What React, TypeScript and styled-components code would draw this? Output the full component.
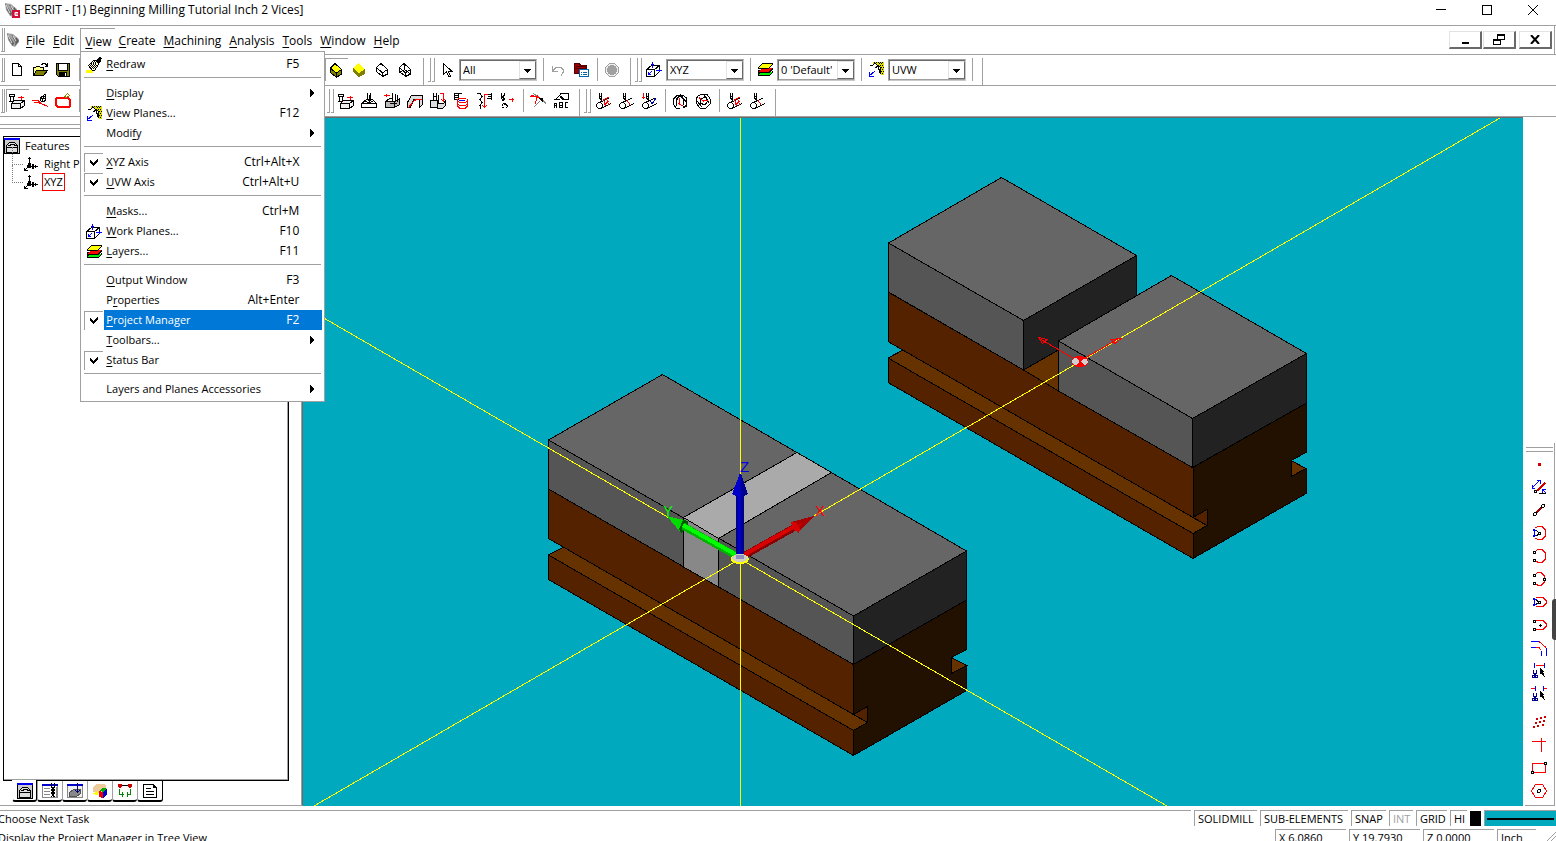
import React from 'react';
import styled, { createGlobalStyle, css } from 'styled-components';

const LINE = '#a0a0a0';
const DARK = '#696969';
const TEAL = '#00a9bd';
const HIGHLIGHT = '#0078d7';
const FONT = '"Open Sans", "Noto Sans", sans-serif';

const GlobalStyle = createGlobalStyle`
  *, *::before, *::after { box-sizing: border-box; }
  body { margin: 0; background: #fff; }
  button, select { font: inherit; color: inherit; border: 0; border-radius: 0; padding: 0; margin: 0; background: transparent; }
`;

/* ---------- drawing helpers ---------- */

type PProps = { d: string; c?: string; f?: string; w?: number };
const P = ({ d, c = '#000', f = 'none', w = 1 }: PProps) => (
  <path d={d} stroke={c} fill={f} strokeWidth={w} />
);
const F = ({ d, f = '#000' }: { d: string; f?: string }) => <path d={d} fill={f} />;

const RED = '#f00';
const BLUE = '#00f';
const CYL = 'M4.5 9.5L14 5M6 15.5L16 10.5M3.5 9.5h2l2 2v2l-2 2h-2l-2-2v-2z';

const icons: Record<string, React.ReactNode> = {
  newFile: <P d="M3.5 1.5h6l3 3v9h-9zM9.5 1.5v3h3" />,
  open: (
    <>
      <P d="M1.5 13.5v-8h2l1-1h3l1 1h3v3" f="#ff8" />
      <P d="M1.5 13.5l3-5h11l-4 5z" f="#808000" />
      <P d="M9 2.5h1l1-1h2l1 1v1M15.5 1v3h-3" />
    </>
  ),
  save: (
    <>
      <P d="M1.5 1.5h13v13h-11l-2-2z" f="#808000" />
      <F d="M4 2h8v6H4z" f="#fff" />
      <F d="M4 10h8v4H4z" />
      <F d="M10 11h1v3h-1z" f="#fff" />
      <P d="M3.5 2v6.5h9V2" />
    </>
  ),
  cubeEdge: (
    <>
      <F d="M2 6L7 2l7 6-6 5z" f="#ff0" />
      <F d="M2 6l6 6v3L2 11zM8 11l6-4v5l-5 3z" f="#808000" />
      <P d="M2.5 6L7 1.5l6.5 6v4.5L8.5 15.5l-6-5zM2.5 6l6 5.5v4M8.5 11l5-3.5" />
    </>
  ),
  cubeSolid: (
    <>
      <F d="M2 6l5-5 7 6-6 5z" f="#ff0" />
      <F d="M2 6l6 5v4l-6-5zM8 11l6-4v5l-6 3z" f="#808000" />
    </>
  ),
  cubeHidden: <P d="M2.5 5.5L7 1.5l6.5 6v4.5L8.5 14.5l-6-5zM2.5 5.5l6 5.5v3.5M8.5 11l5-3.5" />,
  cubeWire: <P d="M2.5 5.5L7 1.5l6.5 6v4.5L8.5 14.5l-6-5zM2.5 5.5l6 5.5v3.5M8.5 11l5-3.5M7.5 1.5v6l6 4.5M7.5 7.5l-5 3" />,
  cursor: <P d="M4.5 1.5v11l3-3l2 5h2l-2-5h3.5z" f="#fff" />,
  undo: <P d="M2.5 4v5h5M3 8.5l3-3h5l2 2v3l-2 3" c={LINE} />,
  props: (
    <>
      <P d="M1.5 1.5h5l1 2h6v8h-12z" c="#500" f="#900" />
      <P d="M2 6.5h11M3 4.5h10" c="#500" />
      <P d="M6.5 7.5h9v7h-9z" c="#06a" f="#fff" />
      <P d="M8 10.5h1M10 10.5h4M8 12.5h1M10 12.5h4" c="#06a" />
    </>
  ),
  stop: (
    <>
      <P d="M5.5 1.5h5l4 4v5l-4 4h-5l-4-4v-5z" c={LINE} f="#eee" />
      <circle cx="8" cy="8" r="5" fill={LINE} />
    </>
  ),
  workPlane: (
    <>
      <P d="M.5 7.5h8v7h-8zM.5 7.5l5-4h8l-5 4M13.5 3.5v6l-5 5" />
      <P d="M6.5 0v6M5 2.5h3M10 8.5h6M13.5 7v3M3 12l3-3M2.5 10v2.5h2" c={BLUE} />
    </>
  ),
  layers: (
    <>
      <F d="M1 11h12l3-3v2l-3 4H1z" />
      <F d="M2 12l3-2h10l-3 3H1z" f="#0e0" />
      <F d="M1 8h12l3-3v2l-3 4H1z" />
      <F d="M2 9l3-3h10l-3 4H1z" f="#f00" />
      <F d="M1 5l4-4h11v1l-4 5H1z" />
      <F d="M2 5l4-3h9l-3 4H2z" f="#ff0" />
    </>
  ),
  viewPlane: (
    <>
      <F d="M5 0h11v13h-3V5L8 2H5z" f="#dd0" />
      <P d="M6 .5h1M8 .5h1M10 .5h1M12 .5h1M14 .5h1M7 1.5h1M11 1.5h1M13 1.5h1M12 3.5h1M14 3.5h1M13 5.5h1M15 5.5h1M14 7.5h1M13 9.5h1M15 9.5h1M14 11.5h1" />
      <P d="M2 3.5h2l3-2l6 4M7 5.5l3-1l2 6M12.5 5v7M9 3l4 8" />
      <P d="M7 9l-6 5M1.5 10v4.5h4" c={BLUE} />
    </>
  ),
  brush: (
    <>
      <F d="M0 13h7v3H0z" f="#ff0" />
      <P d="M2.5 8.5l5-5h4l1 4l-4 6h-2z" f="#ffc" />
      <P d="M5 6.5h1M7 6.5h1M9 6.5h1M4 8.5h1M6 8.5h1M8 8.5h1M10 8.5h1M6 10.5h1M8 10.5h1M8 4.5h1M10 4.5h1M5 7.5h1M7 7.5h1M9 7.5h1M5 9.5h1M7 9.5h1M9 9.5h1M7 11.5h1M7 5.5h1M9 5.5h1" />
      <F d="M10 3l3-3 3 1-1 3-3 3z" />
    </>
  ),
  millBox: (
    <>
      <P d="M.5 1.5h5v2h-5zM1.5 3.5v5M4.5 3.5v5M0 8.5h5" />
      <P d="M2.5 10.5h9v5h-9zM2.5 10.5l3-3h10l-4 3M15.5 7.5v5l-4 3" f="#eee" />
      <P d="M9 4.5h6M12.5 2.5v4" c={RED} />
    </>
  ),
  probe: (
    <>
      <circle cx="11" cy="6" r="2.5" fill="none" stroke="#000" />
      <P d="M9.5 9l3-8M13.5 1v6M9 5h4" />
      <P d="M0 7.5h6l3 3l7 3M2 9l7 1.5" c={RED} />
    </>
  ),
  pocketRed: (
    <>
      <P d="M2 5h11l2 2v6l-1 1H3l-2-2V6z" c={RED} w={2} />
      <P d="M9.5 3.5l3-3l2 2l-3 2z" c="#880" />
    </>
  ),
  millFace: (
    <>
      <P d="M.5 10.5l5-4h6l4 4v4h-15zM.5 10.5h15" f="#fff" />
      <P d="M6.5 0v6l2 3l1-3V0M8.5 2v6M4 8.5l4 1l4-1" />
    </>
  ),
  millPocket: (
    <>
      <P d="M1.5 8.5h9v6h-9zM10.5 8.5l5-3v6l-5 3M1.5 8.5l4-3h3" f="#bbb" />
      <P d="M8.5 0v8l2 1l1-1V1M13.5 2v7M6 10.5h7" />
      <P d="M0 2.5h6M2.5 1v3" c={RED} />
    </>
  ),
  millContour: (
    <>
      <P d="M.5 14.5v-5l4-7h11v9l-3 3v-8h-6l-3 8z" f="#ddd" />
      <P d="M1 15l5-6l4-3h5" c={RED} />
    </>
  ),
  millRest: (
    <>
      <P d="M.5 7.5h7v7h-7zM7.5 10.5h6l2-3v5l-3 3h-5z" f="#ddd" />
      <P d="M3.5 0v8M6.5 0v8M3.5 3.5h3M8.5 2v8" />
      <P d="M10 .5h3v8M11 6.5h1M14 6.5h1M12 7.5h2" c={RED} />
    </>
  ),
  millThread: (
    <>
      <P d="M1.5 .5h4v6h-4zM3 .5h6M2 2.5h4M2 4.5h4" />
      <P d="M5 5.5h8M4.5 6v7l2 2h6l2-2V6M5 8.5l2 1h5l2-1M5 11.5l2 1h5l2-1" c={RED} />
      <P d="M6 7.5h6" c={BLUE} />
    </>
  ),
  millPark: (
    <>
      <P d="M1 .5h3l2 3l-2 3l2 3l-2 3l1 3M15.5 0v7M11 1.5h4M12 3.5h3M11 5.5h4" />
      <P d="M12 1.5H8.5v12M6 12l2.500 2.500L11 12" c={RED} />
    </>
  ),
  drill: (
    <>
      <P d="M2.5 0v3l3 3l-2 2M5.5 0v2l-3 3l2 3M2.5 13.5l2-3l4 2l-1 3M6.5 10l2 4M3 14.5h2" />
      <P d="M10 6.5h5M13.5 4.5v4" c={RED} />
    </>
  ),
  trim: (
    <>
      <P d="M3 .5l8 5l5 5M10 8l-6 6" c="#888" />
      <P d="M0 3.5h4l5 1l4 3M8 2l-3 9M1 2.5h3" c={RED} />
      <F d="M9 5h4v4h-1z" />
    </>
  ),
  engrave: (
    <>
      <P d="M3 6.5l5-6h7v6h-5l-3-3M8 3l3 4M1 6.5h6" />
      <P d="M1.5 15v-5h2v5M1.5 12.5h2M6.5 9.5h3v5h-3zM6.5 12h3M15 9.5h-2.500v5H15" />
    </>
  ),
  lathe1: (
    <>
      <P d={CYL} />
      <P d="M4.5 0v5l2 2V0M4.5 3.5h2" />
      <P d="M8 6l3 7M11 5l3 7M8 7l6-3M9 12l5-4" c={RED} />
    </>
  ),
  lathe2: (
    <>
      <P d={CYL} />
      <P d="M5.5 0v5l2 2V0M5.5 3.5h2" />
      <P d="M9 7l3 5" c={RED} />
    </>
  ),
  lathe3: (
    <>
      <P d={CYL} />
      <P d="M5.5 0v5l2 2V0M5.5 3.5h2" />
      <P d="M2.5 0v6M1 4.5h3" c={RED} />
      <P d="M9 7l2 4l4-6" c="#00a" />
    </>
  ),
  spin1: (
    <>
      <P d="M1.5 12V6l4-4h5l4 3v7l-3 3M4.5 13V6l3-3l4 3v6M8 1l6 8M2 12l2 3h4M11 14l4-1M3 4l3 3M9 4l3-2" />
      <P d="M7.5 5v6l3 2M6 10l3 2" c={RED} />
    </>
  ),
  spin2: (
    <>
      <P d="M3 3l4-2h5l3 5v5l-4 4H5l-4-5V6zM5 6l6-2l2 4l-3 4l-5-2zM2 8l5 6M9 2l5 8" />
      <P d="M4 4.500l5 4M8 7.500h5" c={RED} />
    </>
  ),
  point: <F d="M7 7h3v3H7z" f="#d00000" />,
  dimLine: (
    <>
      <P d="M6 12l8-8" c="#c00" w={2} />
      <P d="M1.5 8.5l7-7M1 6v3h3M6 1.5h3v3M11.5 10.5v4M11 10.5h4M11 10l4 4" c={BLUE} />
      <P d="M3.5 11.5h2v2h-2zM8 14.5h7" />
    </>
  ),
  segment: (
    <>
      <P d="M5 11l6-6" c="#900" w={2} />
      <circle cx="4" cy="12" r="1.5" fill="#fff" stroke="#000" />
      <circle cx="12" cy="4" r="1.5" fill="#fff" stroke="#000" />
    </>
  ),
  arcC: (
    <>
      <P d="M4 3l3-1.5h4L14.5 5v6L11 14.5H7L4 13" c={RED} />
      <P d="M3.5 4v8M2 5.5h4M2 10.5h4M2.5 4v2M2.5 10v2" c={BLUE} />
      <P d="M7.5 7.5h2v2h-2zM5 5l3 3M5 11l3-2" />
    </>
  ),
  arc2: (
    <>
      <P d="M5 3l2-1.5h4L14.5 5v6L11 14.5H7L5 13" c={RED} />
      <P d="M2.5 3.5h2v2h-2zM2.5 11.5h2v2h-2z" f="#fff" />
    </>
  ),
  arc3: (
    <>
      <P d="M5 3l2-1.5h3L13.5 5v6L10 14.5H7L5 13" c={RED} />
      <P d="M2.5 3.5h2v2h-2zM2.5 11.5h2v2h-2zM12.5 7.5h2v2h-2z" f="#fff" />
    </>
  ),
  arcD: (
    <>
      <P d="M5 3.5h7l3 3v3l-3 3H5" c={RED} />
      <P d="M3.5 4v8M2 5.5h4M2 10.5h4M2.5 4v2M2.5 10v2" c={BLUE} />
      <P d="M7.5 7.5h2v2h-2zM5 6l3 2M5 10l3-1" />
    </>
  ),
  slot: (
    <>
      <P d="M5 3.5h7l3 3v3l-3 3H5" c={RED} />
      <P d="M2.5 3.5h2v2h-2zM2.5 11.5h2v2h-2zM8 8.5h3M9.5 7v3" f="#fff" />
    </>
  ),
  offset: (
    <>
      <P d="M0 1.5h8M0 7.5h5M10.5 11v5M15.5 8v8" c={BLUE} />
      <P d="M8 1.5l7 6M5 7.5h3l2.500 3" c={RED} />
    </>
  ),
  cutJoin: (
    <>
      <P d="M4.5 2.5h9" c={RED} />
      <P d="M3.5 0v5M13.5 0v5" c={BLUE} />
      <P d="M2.5 7v3l2 2M5.5 7v3l-2 2M1.5 12.5h2v2h-2zM4.5 12.5h2v2h-2z" c="#008" />
      <F d="M9 5l5 4h-2l2 5h-1l-3-4-1 1z" />
    </>
  ),
  cutSplit: (
    <>
      <P d="M0 2.5h4M13 2.5h3" c={RED} />
      <P d="M4.5 0v5M12.5 0v5" c={BLUE} />
      <P d="M2.5 7v3l2 2M5.5 7v3l-2 2M1.5 12.5h2v2h-2zM4.5 12.5h2v2h-2z" c="#008" />
      <F d="M9 5l5 4h-2l2 5h-1l-3-4-1 1z" />
    </>
  ),
  pattern: <F f="#c00" d="M5 4h2v2H5zM9 3h2v2H9zM13 2h2v2h-2zM4 8h2v2H4zM8 7h2v2H8zM12 6h2v2h-2zM2 12h2v2H2zM6 11h2v2H6zM11 10h2v2h-2z" />,
  cross: <P d="M1 4.5h14M10.5 1v14" c={RED} />,
  rect: (
    <>
      <P d="M1.5 3.5h13v9h-13z" c={RED} />
      <P d="M.5 11.5h2v2h-2zM13.5 2.5h2v2h-2z" f="#fff" />
    </>
  ),
  hexagon: (
    <>
      <P d="M4.5 1.5h7l4 6.5l-4 6.500h-7L.5 8z" c={RED} />
      <circle cx="8" cy="8" r="1.5" fill="none" stroke="#000" />
    </>
  ),
  features: (
    <>
      <P d="M.5 .5h15v15H.5z" f="#ccc" />
      <F d="M0 0h16v2H0z" f="#00e" />
      <P d="M2.5 9.5h11v5h-11zM2.5 9.5v-2l3-3h5l3 3v2M4 7.5h2l1-1h3l1 1h2" f="#ddd" />
    </>
  ),
  axis: (
    <>
      <P d="M6.5 1v9M5 2.5h3M6 10.5h9M12.5 9v3M6 10l-4 4M1.500 12v2.500h3" />
      <F d="M5 7h3v5H4V9h1zM9 8h2v5H9z" />
    </>
  ),
  tools: (
    <>
      <P d="M.5 1.5h15v13H.5z" c="#888" f="#fff" />
      <F d="M0 1h16v2H0z" f="#00c" />
      <P d="M2 5.5h6M2 8.5h6M2 11.5h6M14.5 4v10" c="#888" />
      <P d="M9.5 0v4l3 3l-3 3l3 4M12.5 0v4l-3 3l3 3l-3 4" />
    </>
  ),
  ops: (
    <>
      <P d="M.5 1.5h15v13H.5z" c="#888" f="#eee" />
      <F d="M0 1h16v2H0z" f="#00c" />
      <P d="M2.5 9.5l4-3h7v4l-4 3h-7z" c="#555" f="#888" />
      <P d="M10.5 0v9M8 7l2.500 2.500L13 7" c="#007" />
    </>
  ),
  parts: (
    <>
      <F d="M1 4l4-3h8l2 5-8 4-6-1z" f="#eecb9a" />
      <F d="M0 11l6-3v4z" f="#ff0" />
      <F d="M7 8l4-3 5 1-4 3z" f="#0a0" />
      <F d="M7 8l4 1v6l-4-1z" f="#e00" />
      <F d="M11 9l4-3v6l-4 3z" f="#00c" />
    </>
  ),
  link: (
    <>
      <P d="M2 2.500h12" />
      <F d="M1 1h4v3H4v1H2V4H1zM11 1h4v3h-1v1h-2V4h-1z" f="#c00" />
      <P d="M2.5 6v5.500h4M13.500 6v5.500h-4M5.500 9v5M10.500 9v5" c="#080" />
    </>
  ),
  report: (
    <>
      <P d="M1.5 1.5h10l3 3v10h-13z" />
      <F d="M11 1l4 4h-4z" />
      <P d="M4 5.5h5M4 8.5h8M4 11.5h8" />
    </>
  ),
  check: <F d="M4 5v3l3 3 5-5V3L7 8z" />,
  arrowRight: <F d="M6 4l4 4-4 4z" />,
};

const Svg = styled.svg`
  display: block;
  flex: none;
`;

const Icon = ({ name }: { name: string }) => (
  <Svg width="16" height="16" viewBox="0 0 16 16" shapeRendering="crispEdges" aria-hidden="true">
    {icons[name]}
  </Svg>
);

const AppLogo = ({ badge }: { badge?: boolean }) => (
  <Svg width="16" height="16" viewBox="0 0 16 16" aria-hidden="true">
    <path d="M1 1l6 1 6 5 0 3-4 5-3-1-4-6z" fill="#a6a6a6" />
    <path d="M1 1l2 7 4 6 1-3zM5 2l4 8 1-3zM10 5l-1 9 4-5z" fill="#5c5c5c" />
    <path d="M2 3l4 8M7 4l3 5" stroke="#e4e4e4" fill="none" />
    {badge && <path d="M8 8h8v8H8z" fill="#d0103a" />}
    {badge && <path d="M14 10.5h-3v3h3M11 12h3" stroke="#fff" fill="none" />}
  </Svg>
);

/* ---------- frame ---------- */

const Window = styled.div`
  position: relative;
  display: flex;
  flex-direction: column;
  height: 100vh;
  overflow: hidden;
  background: #fff;
  color: #000;
  font: 12px/16px ${FONT};
  white-space: nowrap;
`;

const TitleBar = styled.header`
  display: flex;
  align-items: center;
  flex: none;
  height: 26px;
  padding: 0 0 5px 4px;
  border-bottom: 1px solid ${LINE};
`;

const Title = styled.h1`
  flex: 1;
  margin: 0 0 0 4px;
  font-size: 12px;
  line-height: 16px;
  font-weight: 400;
`;

const CaptionButton = styled.button`
  display: grid;
  place-items: center;
  width: 46px;
  height: 20px;
`;

const MenuBar = styled.nav`
  display: flex;
  align-items: center;
  flex: none;
  height: 29px;
  border-bottom: 1px solid ${LINE};
`;

const MenuSlot = styled.div`
  position: relative;
`;

const MenuTop = styled.button<{ $open?: boolean }>`
  height: 24px;
  padding: 0 4px 0 3px;
  border-top: 1px solid transparent;
  border-left: 1px solid transparent;
  ${(p) => p.$open && css`
    border-color: ${LINE};
    margin-left: 2px;
    padding: 2px 3px 0 4px;
  `}
`;

const Key = styled.span`
  text-decoration: underline;
  text-underline-offset: 2px;
`;

const Grow = styled.div`
  flex: 1;
`;

const MdiButton = styled.button<{ $apart?: boolean }>`
  display: grid;
  place-items: center;
  width: 33px;
  height: 18px;
  margin-left: ${(p) => (p.$apart ? 3 : 1)}px;
  border-style: solid;
  border-width: 1px 2px 2px 1px;
  border-color: #e3e3e3 ${DARK} ${DARK} #e3e3e3;
`;

const MdiEdge = styled.span`
  align-self: stretch;
  width: 3px;
  margin-right: 1px;
  border-right: 1px solid ${LINE};
`;

/* ---------- drop-down menu ---------- */

const Menu = styled.div`
  position: absolute;
  z-index: 5;
  top: 23px;
  left: 2px;
  width: 245px;
  padding: 2px 2px 2px 3px;
  background: #fff;
  border: 1px solid ${LINE};
`;

const MenuItem = styled.button`
  display: flex;
  align-items: center;
  width: 100%;
  height: 20px;
  text-align: left;
`;

const MenuMark = styled.span<{ $checked?: boolean }>`
  display: block;
  flex: none;
  width: 19px;
  height: 19px;
  margin-right: 1px;
  padding: 1px;
  border-top: 1px solid ${(p) => (p.$checked ? LINE : 'transparent')};
  border-left: 1px solid ${(p) => (p.$checked ? LINE : 'transparent')};
`;

const MenuLabel = styled.span<{ $active?: boolean }>`
  display: flex;
  flex: 1;
  align-items: center;
  height: 20px;
  padding: 0 2px;
  ${(p) => p.$active && css`
    background: ${HIGHLIGHT};
    color: #fff;
  `}
`;

const MenuText = styled.span`
  flex: 1;
  font-size: 11px;
`;

const MenuTail = styled.span`
  display: block;
  width: 21px;
  padding-left: 5px;
`;

const MenuRule = styled.div`
  height: 9px;
  padding-top: 3px;

  &::before {
    content: '';
    display: block;
    margin-right: 1px;
    border-top: 1px solid ${LINE};
  }
`;

type Entry = { label: string; key: number; accel?: string; icon?: string; checked?: boolean; active?: boolean; sub?: boolean };

const viewMenu: Entry[][] = [
  [{ label: 'Redraw', key: 0, accel: 'F5', icon: 'brush' }],
  [
    { label: 'Display', key: 0, sub: true },
    { label: 'View Planes...', key: 0, accel: 'F12', icon: 'viewPlane' },
    { label: 'Modify', key: 4, sub: true },
  ],
  [
    { label: 'XYZ Axis', key: 0, accel: 'Ctrl+Alt+X', checked: true },
    { label: 'UVW Axis', key: 0, accel: 'Ctrl+Alt+U', checked: true },
  ],
  [
    { label: 'Masks...', key: 0, accel: 'Ctrl+M' },
    { label: 'Work Planes...', key: 0, accel: 'F10', icon: 'workPlane' },
    { label: 'Layers...', key: 0, accel: 'F11', icon: 'layers' },
  ],
  [
    { label: 'Output Window', key: 0, accel: 'F3' },
    { label: 'Properties', key: 1, accel: 'Alt+Enter' },
    { label: 'Project Manager', key: 0, accel: 'F2', checked: true, active: true },
    { label: 'Toolbars...', key: 0, sub: true },
    { label: 'Status Bar', key: 0, checked: true },
  ],
  [{ label: 'Layers and Planes Accessories', key: -1, sub: true }],
];

const Mnemonic = ({ text, at = 0 }: { text: string; at?: number }) =>
  at < 0 ? <>{text}</> : <>{text.slice(0, at)}<Key>{text[at]}</Key>{text.slice(at + 1)}</>;

const ViewMenu = () => (
  <Menu role="menu" aria-label="View">
    {viewMenu.map((group, g) => (
      <React.Fragment key={g}>
        {g > 0 && <MenuRule role="separator" />}
        {group.map((e) => (
          <MenuItem key={e.label} role="menuitem">
            <MenuMark $checked={e.checked}>
              {e.checked ? <Icon name="check" /> : e.icon ? <Icon name={e.icon} /> : null}
            </MenuMark>
            <MenuLabel $active={e.active}>
              <MenuText><Mnemonic text={e.label} at={e.key} /></MenuText>
              {e.accel && <span>{e.accel}</span>}
              <MenuTail>{e.sub && <Icon name="arrowRight" />}</MenuTail>
            </MenuLabel>
          </MenuItem>
        ))}
      </React.Fragment>
    ))}
  </Menu>
);

/* ---------- toolbars ---------- */

const Toolbar = styled.div`
  display: flex;
  flex: none;
  height: 31px;
  padding-top: 3px;
  border-bottom: 1px solid ${LINE};
`;

const Group = styled.div<{ $end?: boolean }>`
  display: flex;
  align-items: flex-start;
  ${(p) => p.$end && css`
    padding-right: 6px;
    border-right: 1px solid ${LINE};
  `}
`;

const Covered = styled.div<{ $w: number }>`
  flex: 0 0 ${(p) => p.$w}px;
`;

const Grip = styled.span<{ $edge?: boolean }>`
  display: flex;
  flex: none;
  gap: ${(p) => (p.$edge ? 0 : 1)}px;
  width: ${(p) => (p.$edge ? 6 : 12)}px;
  padding-left: ${(p) => (p.$edge ? 1 : 4)}px;

  &::before, &::after {
    content: '';
    width: ${(p) => (p.$edge ? 2 : 3)}px;
    height: 24px;
    border-right: 1px solid ${LINE};
    border-bottom: 1px solid ${LINE};
  }
`;

const ToolButton = styled.button<{ $pressed?: boolean }>`
  display: block;
  flex: none;
  width: 23px;
  height: 23px;
  padding: 2px;
  border-top: 1px solid ${(p) => (p.$pressed ? LINE : 'transparent')};
  border-left: 1px solid ${(p) => (p.$pressed ? LINE : 'transparent')};
`;

const Divider = styled.span`
  flex: none;
  width: 1px;
  height: 23px;
  margin: 0 3px 0 4px;
  background: ${LINE};
`;

const SelectBox = styled.label`
  position: relative;
  flex: none;
  width: 78px;
  height: 22px;
  margin: 1px 2px 0 0;
  border: 1px solid;
  border-color: ${LINE} #c8c8c8 #c8c8c8 ${LINE};
  box-shadow: inset 1px 1px 0 ${DARK}, inset -1px -1px 0 ${LINE};
`;

const SelectInput = styled.select`
  appearance: none;
  width: 100%;
  height: 20px;
  padding: 0 17px 0 3px;
  font-size: 11px;
  line-height: 18px;
  outline: 0;
`;

const SelectArrow = styled.span`
  position: absolute;
  top: 1px;
  right: 0;
  display: block;
  width: 17px;
  height: 18px;
  padding: 7px 4px;
  background: #fff;
  border-style: solid;
  border-width: 1px;
  border-color: #e3e3e3 ${DARK} ${DARK} #e3e3e3;
  pointer-events: none;
`;

const Tool = ({ icon, pressed }: { icon: string; pressed?: boolean }) => (
  <ToolButton $pressed={pressed} aria-label={icon}><Icon name={icon} /></ToolButton>
);

const Combo = ({ value, label }: { value: string; label: string }) => (
  <SelectBox>
    <SelectInput aria-label={label} defaultValue={value}>
      <option>{value}</option>
    </SelectInput>
    <SelectArrow>
      <Svg width="7" height="4" viewBox="0 0 7 4" shapeRendering="crispEdges"><path d="M0 0h7L3.5 4z" /></Svg>
    </SelectArrow>
  </SelectBox>
);

/* ---------- workspace ---------- */

const Workspace = styled.main`
  display: flex;
  flex: 1;
  min-height: 0;
`;

const Panel = styled.aside`
  display: flex;
  flex-direction: column;
  flex: none;
  width: 303px;
  padding: 7px 0 3px;
  border-right: 1px solid ${DARK};
  border-bottom: 1px solid ${LINE};
  box-shadow: inset -1px 0 0 ${LINE};
  font-size: 11px;
`;

const PanelGrip = styled.div`
  flex: none;
  height: 5px;
  margin-bottom: 7px;
  border-top: 1px solid ${LINE};
  border-bottom: 1px solid ${LINE};
`;

const Tree = styled.ul`
  flex: 1;
  min-height: 0;
  margin: 0 13px 0 3px;
  padding: 0;
  list-style: none;
  border: 1px solid #000;
  box-shadow: inset -1px -1px 0 ${LINE};
`;

const TreeRow = styled.li<{ $child?: boolean }>`
  position: relative;
  display: flex;
  align-items: center;
  gap: 3px;
  height: 18px;
  padding-left: ${(p) => (p.$child ? 19 : 0)}px;

  ${(p) => p.$child && css`
    &::before {
      content: '';
      position: absolute;
      left: 8px;
      top: -8px;
      width: 11px;
      height: 18px;
      border-left: 1px dotted #808080;
      border-bottom: 1px dotted #808080;
    }
  `}
`;

const TreeText = styled.span<{ $marked?: boolean }>`
  padding: 0 1px;
  border: 1px solid ${(p) => (p.$marked ? RED : 'transparent')};
`;

const Tabs = styled.div`
  display: flex;
  flex: none;
  padding-left: 12px;
`;

const Tab = styled.button<{ $on?: boolean }>`
  display: block;
  width: 25px;
  height: 21px;
  padding: 2px 4px;
  background: #fff;
  border-left: 1px solid ${LINE};
  border-bottom: 2px solid #000;
  border-radius: 0 0 3px 3px;

  &:last-child {
    border-right: 1px solid #000;
    width: 26px;
  }

  ${(p) => p.$on && css`
    position: relative;
    height: 22px;
    margin-top: -1px;
    padding-top: 3px;
    border-left-color: #fff;
    border-right: 1px solid #000;
  `}
`;

const Viewport = styled.div`
  flex: 1;
  min-width: 0;
  background: ${TEAL};
  border-top: 1px solid ${DARK};

  svg {
    display: block;
    width: 100%;
    height: 100%;
  }
`;

const SideBar = styled.aside`
  position: relative;
  display: flex;
  flex-direction: column;
  justify-content: flex-end;
  flex: none;
  width: 33px;
  padding: 0 1px 0 2px;
`;

const SideTools = styled.div`
  display: flex;
  flex-direction: column;
  align-items: flex-start;
  padding: 4px 2px 3px 3px;
  border-right: 1px solid ${LINE};
  border-bottom: 1px solid ${LINE};
`;

const SideGrip = styled.div`
  width: 27px;
  height: 5px;
  margin: 0 0 0 -2px;
  border-top: 1px solid ${LINE};
  border-bottom: 1px solid ${LINE};
`;

const SideGap = styled.div`
  height: 5px;
`;

const EdgeHandle = styled.span`
  position: absolute;
  right: 0;
  bottom: 166px;
  width: 4px;
  height: 41px;
  background: #444;
  border-radius: 3px 0 0 3px;
`;

/* ---------- status bar ---------- */

const Status = styled.footer`
  flex: none;
  height: 35px;
  padding-top: 4px;
  overflow: hidden;
  font-size: 11px;
`;

const StatusRow = styled.div`
  display: flex;
  gap: 3px;
  height: 16px;
  margin-bottom: 3px;
`;

const StatusText = styled.span<{ $ruled?: boolean }>`
  flex: 1;
  text-indent: -2px;
  border-top: 1px solid ${(p) => (p.$ruled ? LINE : 'transparent')};
`;

const Cell = styled.span<{ $w: number; $off?: boolean }>`
  flex: none;
  width: ${(p) => p.$w}px;
  padding-left: 3px;
  border-top: 1px solid ${LINE};
  border-left: 1px solid ${LINE};
  color: ${(p) => (p.$off ? LINE : '#000')};
`;

const Swatch = styled.span`
  width: 11px;
  margin-top: 1px;
  background: #000;
`;

const LineSample = styled.span`
  display: flex;
  align-items: center;
  width: 72px;
  padding: 0 2px;
  background: ${TEAL};
  border-top: 1px solid ${LINE};
  border-left: 1px solid ${LINE};

  &::before {
    content: '';
    flex: 1;
    height: 2px;
    background: #000;
  }
`;

const SizeGrip = styled.span`
  width: 17px;
`;

/* ---------- 3D scene ---------- */

const Face = ({ p, f }: { p: string; f: string }) => <polygon points={p} fill={f} stroke="#000" />;

const ViceBase = () => (
  <g>
    <Face f="#663300" p="548.5,555 564.5,546.5 853.5,713.5 867.5,722.5 853.5,730.5" />
    <Face f="#552200" p="548.5,489 853.5,664.5 853.5,714.5 548.5,538.5" />
    <Face f="#552200" p="548.5,555 853.5,730.5 853.5,755.5 548.5,579.5" />
    <Face f="#221100" p="853.5,664.5 966.5,600 966.5,649.5 951.5,657.5 951.5,673.5 966.5,665.5 966.5,690.5 853.5,755.5 853.5,730.5 867.5,722.5 867.5,706.5 853.5,714.5" />
    <Face f="#552200" p="853.5,714.5 867.5,706.5 867.5,722.5" />
    <Face f="#663300" p="951.5,657.5 966.5,665.5 951.5,673.5" />
  </g>
);

const Scene = () => (
  <svg viewBox="303 118 1220 688" preserveAspectRatio="xMidYMid slice" shapeRendering="crispEdges" role="img" aria-label="Two milling vices">
    <ViceBase />
    <Face f="#666" p="662.5,374.5 548.5,440 853.5,616 966.5,551" />
    <Face f="#555" p="548.5,440 853.5,616 853.5,664.5 548.5,489" />
    <Face f="#222" p="853.5,616 966.5,551 966.5,600 853.5,664.5" />
    <Face f="#aaa" p="797,452.5 831.5,472.5 718.5,538.5 683.5,517.5" />
    <Face f="#888" p="683.5,517.5 718.5,538.5 718.5,587 683.5,567" />

    <g transform="translate(339.5 -197)">
      <ViceBase />
    </g>
    <Face f="#663300" p="1023.5,370 1058.5,350 1058.5,391" />
    <Face f="#222" p="1023.5,320.5 1136.5,255.5 1136.5,305 1023.5,370" />
    <Face f="#555" p="888.5,243 1023.5,320.5 1023.5,370 888.5,292" />
    <Face f="#666" p="1001.5,177.5 888.5,243 1023.5,320.5 1136.5,255.5" />
    <Face f="#222" p="1192.5,418.5 1306.5,353.5 1306.5,403 1192.5,467.5" />
    <Face f="#555" p="1058.5,341 1192.5,418.5 1192.5,467.5 1058.5,391" />
    <Face f="#666" p="1171.5,275.5 1058.5,341 1192.5,418.5 1306.5,353.5" />

    <path d="M740.5 118V806M303 306L1167 806M314 806L1500 118" stroke="#ff0" fill="none" />

    <path d="M1080 362L1040 339M1080 361L1118 339M1038.5 337.5l9 2l-5 4zM1121 338.5l-10 1l4 4z" stroke="#f00" fill="none" />
    <ellipse cx="1080" cy="361.5" rx="8.5" ry="5.5" fill="#f00" />
    <path d="M1072 361l2-3h3l2 3v1l-2 3h-3l-2-3zM1081 361l3-2h3l1 3-2 3h-2l-3-3z" fill="#d0d0d0" />

    <path d="M740 558L797 526" stroke="#8a0000" strokeWidth="7" />
    <path d="M740 557L797 525" stroke="#d80000" strokeWidth="4" />
    <path d="M814 516L791 522 793 528 799 532z" fill="#a80000" />
    <path d="M791 522l2 7 6 4 1-4-3-6z" fill="#d80000" />
    <path d="M797 524l6-1-4 5z" fill="#c00000" />

    <path d="M667 516L688 521 680 532z" fill="#00dc00" />
    <path d="M683 520l5 1-1 8-6 4-2-4z" fill="#005a00" />
    <path d="M740 558L683 526" stroke="#00b400" strokeWidth="7" />
    <path d="M740 557L683 525" stroke="#00ff00" strokeWidth="4" />

    <path d="M736 494h8v63h-8z" fill="#00008c" />
    <path d="M738 494h3v63h-3z" fill="#0000c8" />
    <path d="M740 473l8 21q-8 6-16 0z" fill="#0000c8" />
    <path d="M741 473l7 21q-4 3-7 3z" fill="#000090" />
    <ellipse cx="740" cy="559" rx="9" ry="5" fill="#ff0" />
    <ellipse cx="740" cy="558" rx="8" ry="4" fill="#d0d0c0" />
    <path d="M736 555h8v4h-8z" fill="#9090c0" />

    <g fontFamily="Liberation Sans, sans-serif" fontSize="15">
      <text x="740" y="472" fill="#0000e0">Z</text>
      <text x="663" y="516" fill="#00ff00">Y</text>
      <text x="815" y="516" fill="#ff0000">X</text>
    </g>
  </svg>
);

/* ---------- page ---------- */

const millTools = ['millBox', 'millFace', 'millPocket', 'millContour', 'millRest', 'millThread', 'millPark', 'drill'];
const sideTools = ['point', 'dimLine', 'segment', 'arcC', 'arc2', 'arc3', 'arcD', 'slot', 'offset', 'cutJoin', 'cutSplit'];
const sideShapes = ['pattern', 'cross', 'rect', 'hexagon'];
const panelTabs = ['features', 'tools', 'ops', 'parts', 'link', 'report'];

export default function App() {
  return (
    <Window>
      <GlobalStyle />
      <TitleBar>
        <AppLogo badge />
        <Title>ESPRIT - [1) Beginning Milling Tutorial Inch 2 Vices]</Title>
        <CaptionButton aria-label="Minimize">
          <Svg width="10" height="10" shapeRendering="crispEdges"><P d="M0 4.5h10" /></Svg>
        </CaptionButton>
        <CaptionButton aria-label="Maximize">
          <Svg width="10" height="10" shapeRendering="crispEdges"><P d="M.5 .5h9v9h-9z" /></Svg>
        </CaptionButton>
        <CaptionButton aria-label="Close">
          <Svg width="10" height="10"><P d="M0 0l10 10M10 0L0 10" /></Svg>
        </CaptionButton>
      </TitleBar>

      <MenuBar aria-label="Main menu">
        <Grip $edge />
        <AppLogo />
        <MenuSlot><MenuTop><Mnemonic text="File" /></MenuTop></MenuSlot>
        <MenuSlot><MenuTop><Mnemonic text="Edit" /></MenuTop></MenuSlot>
        <MenuSlot>
          <MenuTop $open aria-expanded="true"><Mnemonic text="View" /></MenuTop>
          <ViewMenu />
        </MenuSlot>
        {['Create', 'Machining', 'Analysis', 'Tools', 'Window', 'Help'].map((m) => (
          <MenuSlot key={m}><MenuTop><Mnemonic text={m} /></MenuTop></MenuSlot>
        ))}
        <Grow />
        <MdiButton aria-label="Minimize document">
          <Svg width="12" height="11" shapeRendering="crispEdges"><F d="M3 8h7v2H3z" /></Svg>
        </MdiButton>
        <MdiButton aria-label="Restore document">
          <Svg width="12" height="11" shapeRendering="crispEdges">
            <P d="M4.5 5V.5h7v5H8M4 1.5h8M.5 5.5h7v5h-7zM0 6.5h8" />
          </Svg>
        </MdiButton>
        <MdiButton $apart aria-label="Close document">
          <Svg width="10" height="9"><P d="M1 0l8 9M9 0L1 9" w={2} /></Svg>
        </MdiButton>
        <MdiEdge />
      </MenuBar>

      <Toolbar role="toolbar" aria-label="Standard">
        <Group>
          <Grip $edge />
          <Tool icon="newFile" />
          <Tool icon="open" />
          <Tool icon="save" />
          <Divider />
        </Group>
        <Covered $w={242} />
        <Group $end>
          <Tool icon="cubeEdge" pressed />
          <Tool icon="cubeSolid" />
          <Tool icon="cubeHidden" />
          <Tool icon="cubeWire" />
        </Group>
        <Group $end>
          <Grip />
          <Tool icon="cursor" />
          <Combo value="All" label="Selection filter" />
          <Divider />
          <Tool icon="undo" />
          <Tool icon="props" />
          <Divider />
          <Tool icon="stop" />
        </Group>
        <Group $end>
          <Grip />
          <Tool icon="workPlane" />
          <Combo value="XYZ" label="Work plane" />
          <Divider />
          <Tool icon="layers" />
          <Combo value="0 'Default'" label="Layer" />
          <Divider />
          <Tool icon="viewPlane" />
          <Combo value="UVW" label="View plane" />
          <Divider />
        </Group>
      </Toolbar>

      <Toolbar role="toolbar" aria-label="Machining">
        <Group>
          <Grip $edge />
          <Tool icon="millBox" pressed />
          <Tool icon="probe" />
          <Tool icon="pocketRed" />
          <Divider />
        </Group>
        <Covered $w={240} />
        <Group $end>
          <Grip />
          {millTools.map((t) => <Tool key={t} icon={t} />)}
          <Divider />
          <Tool icon="trim" />
          <Tool icon="engrave" />
        </Group>
        <Group $end>
          <Grip />
          <Tool icon="lathe1" />
          <Tool icon="lathe2" />
          <Tool icon="lathe3" />
          <Divider />
          <Tool icon="spin1" />
          <Tool icon="spin2" />
          <Divider />
          <Tool icon="lathe1" />
          <Tool icon="lathe2" />
        </Group>
      </Toolbar>

      <Workspace>
        <Panel>
          <PanelGrip />
          <Tree>
            <TreeRow><Icon name="features" /><TreeText>Features</TreeText></TreeRow>
            <TreeRow $child><Icon name="axis" /><TreeText>Right Part</TreeText></TreeRow>
            <TreeRow $child><Icon name="axis" /><TreeText $marked>XYZ</TreeText></TreeRow>
          </Tree>
          <Tabs role="tablist">
            {panelTabs.map((t, i) => (
              <Tab key={t} $on={i === 0} role="tab" aria-selected={i === 0} aria-label={t}><Icon name={t} /></Tab>
            ))}
          </Tabs>
        </Panel>
        <Viewport><Scene /></Viewport>
        <SideBar>
          <SideTools>
            <SideGrip />
            {sideTools.map((t) => <Tool key={t} icon={t} />)}
            <SideGap />
            {sideShapes.map((t) => <Tool key={t} icon={t} />)}
          </SideTools>
          <EdgeHandle />
        </SideBar>
      </Workspace>

      <Status>
        <StatusRow>
          <StatusText $ruled>Choose Next Task</StatusText>
          <Cell $w={63}>SOLIDMILL</Cell>
          <Cell $w={88}>SUB-ELEMENTS</Cell>
          <Cell $w={35}>SNAP</Cell>
          <Cell $w={24} $off>INT</Cell>
          <Cell $w={31}>GRID</Cell>
          <Cell $w={17}>HI</Cell>
          <Swatch />
          <LineSample />
        </StatusRow>
        <StatusRow>
          <StatusText>Display the Project Manager in Tree View</StatusText>
          <Cell $w={71}>X 6.0860</Cell>
          <Cell $w={71}>Y 19.7930</Cell>
          <Cell $w={71}>Z 0.0000</Cell>
          <Cell $w={39}>Inch</Cell>
          <SizeGrip>
            <Svg width="17" height="12"><P d="M8 12l9-9M12 12l5-5" c={LINE} /></Svg>
          </SizeGrip>
        </StatusRow>
      </Status>
    </Window>
  );
}
